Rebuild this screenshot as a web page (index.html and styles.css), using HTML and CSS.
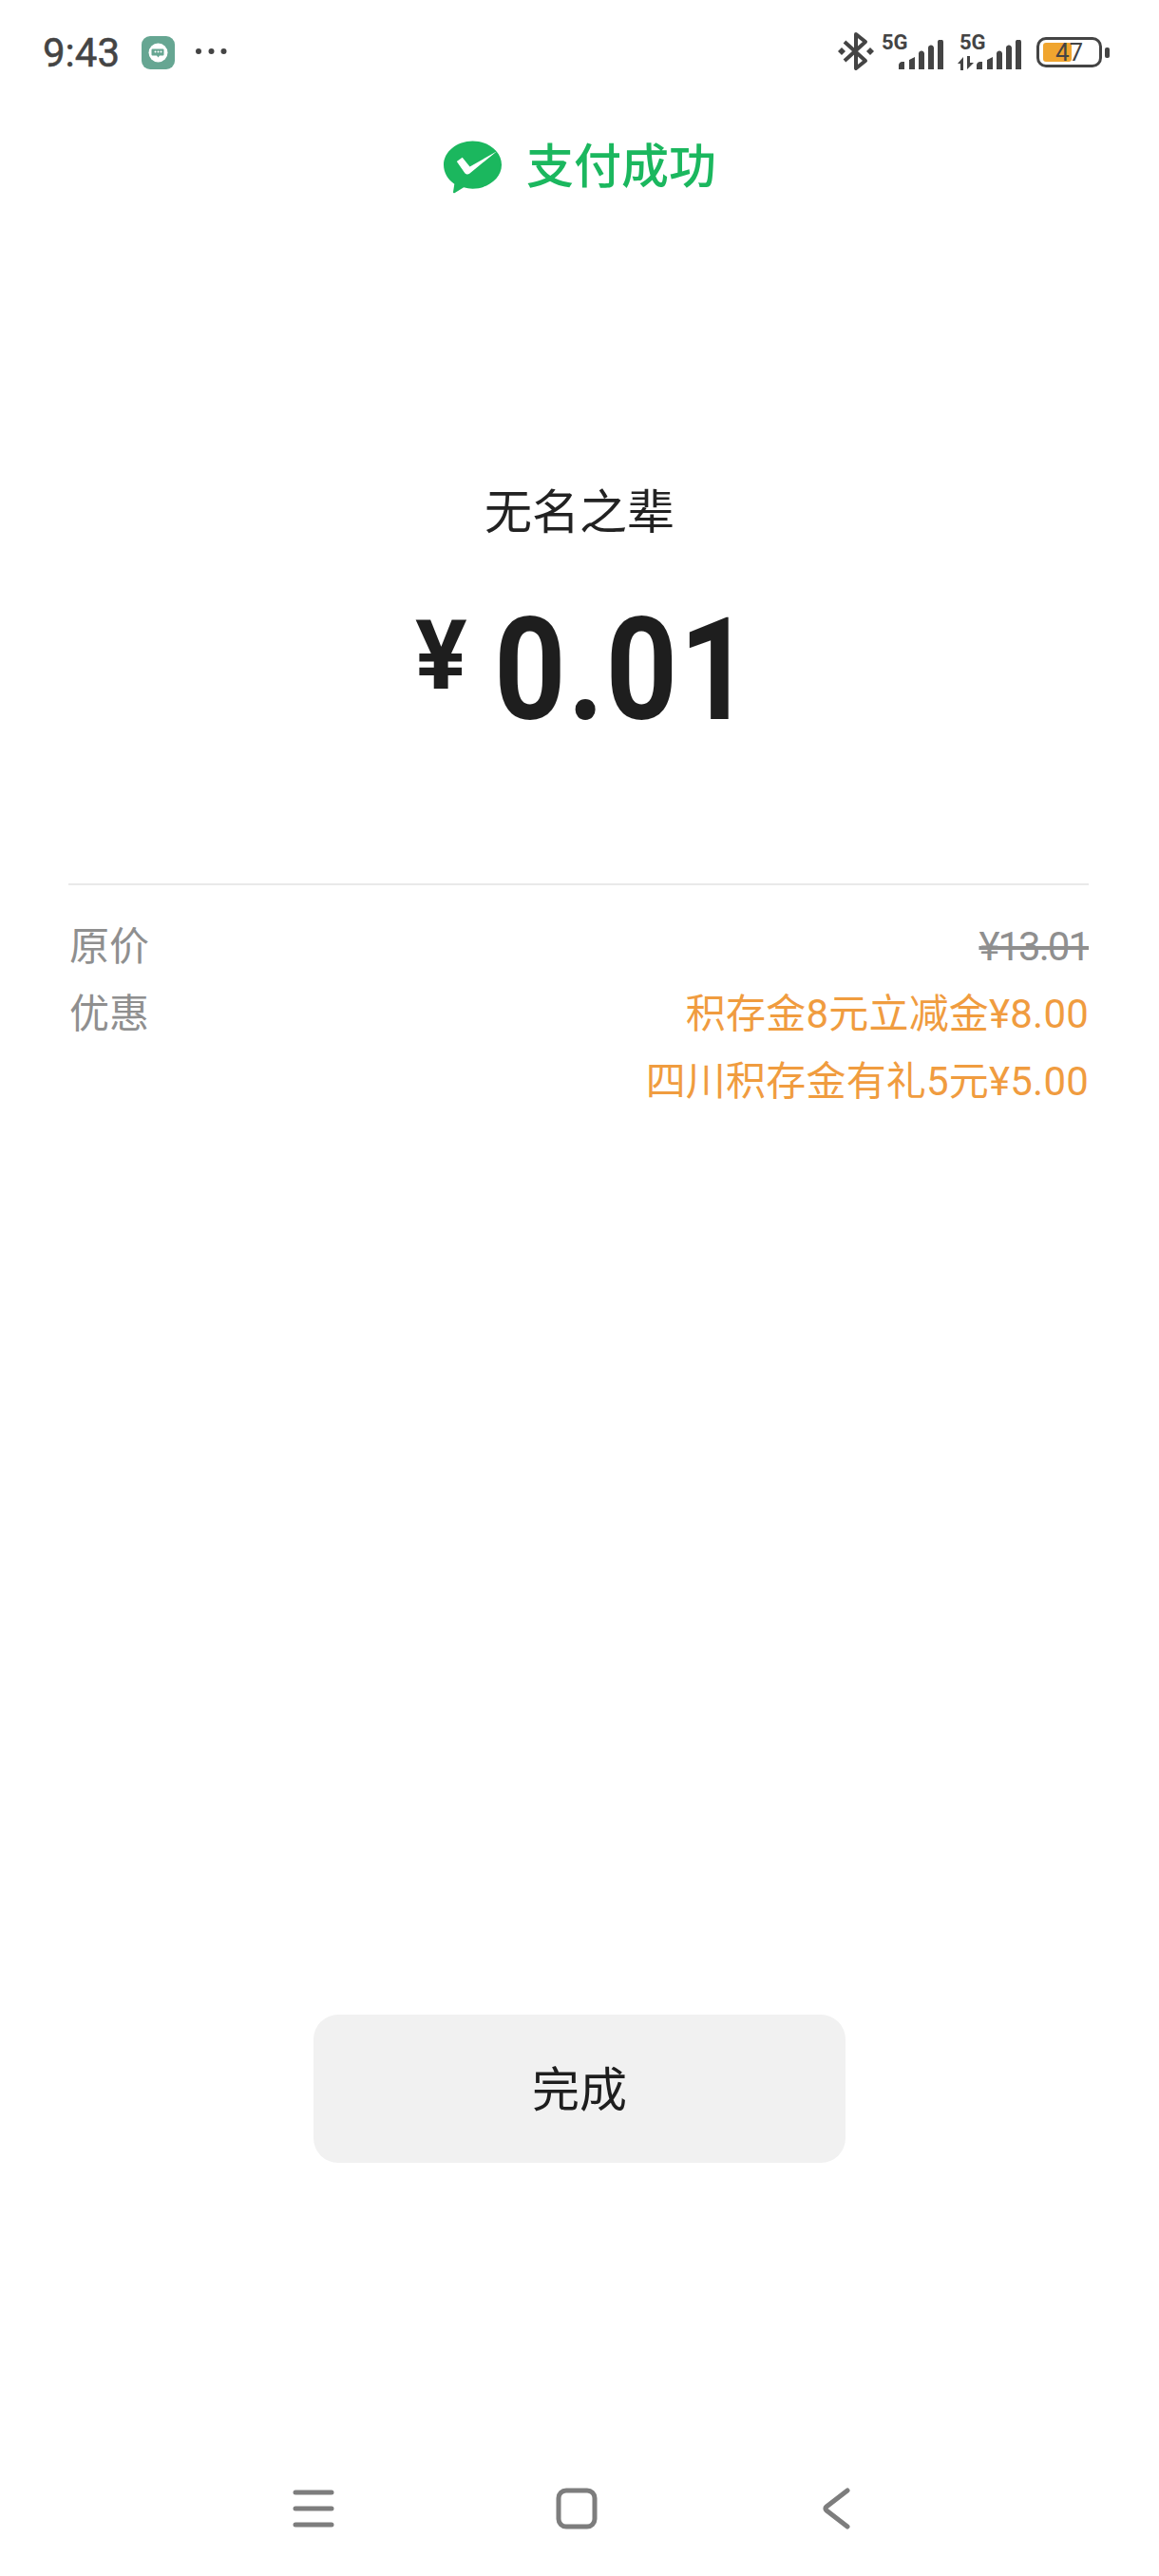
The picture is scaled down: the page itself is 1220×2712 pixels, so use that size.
FILE: index.html
```html
<!DOCTYPE html>
<html lang="zh-CN">
<head>
    <meta charset="UTF-8">
    <meta name="viewport" content="width=device-width, initial-scale=1.0">
    <title>支付成功</title>
    <link rel="stylesheet" href="styles.css">
</head>
<body>
    <div class="page">
        <div class="status-bar">
            <div class="status-left">
                <span class="time">9:43</span>
                <svg class="app-icon" width="35" height="35" viewBox="0 0 35 35">
                    <rect width="35" height="35" rx="9" fill="#66a692"/>
                    <circle cx="17.500" cy="17.500" r="10" fill="#fff"/>
                    <path d="M12.500 13.500h10a1 1 0 0 1 1 1v5a1 1 0 0 1-1 1h-3.500l-1.500 2-1.500-2h-4.500a1 1 0 0 1-1-1v-5a1 1 0 0 1 1-1z" fill="#66a692"/>
                    <circle cx="14.500" cy="16.500" r="1" fill="#fff"/>
                    <circle cx="17.500" cy="16.500" r="1" fill="#fff"/>
                    <circle cx="20.500" cy="16.500" r="1" fill="#fff"/>
                </svg>
                <svg class="dots" width="34" height="8" viewBox="0 0 34 8">
                    <circle cx="4" cy="4" r="3" fill="#444"/>
                    <circle cx="17.500" cy="4" r="3" fill="#444"/>
                    <circle cx="30.500" cy="4" r="3" fill="#444"/>
                </svg>
            </div>
            <div class="status-right">
                <svg class="bluetooth" width="40" height="42" viewBox="0 0 40 42">
                    <path d="M8 11l22 20-10 8V3l10 8L8 31" fill="none" stroke="#444" stroke-width="4" stroke-linejoin="round"/>
                    <path d="M5 17l4 4-4 4-4-4zM35 17l4 4-4 4-4-4z" fill="#444"/>
                </svg>
                <div class="signal">
                    <span class="net-label">5G</span>
                    <svg class="bars" width="48" height="32" viewBox="0 0 48 32">
                        <path d="M0 26a4 4 0 0 1 3-3h3v8H0zM11 21l6-3v13h-6zM21 15a3 3 0 0 1 6-1v17h-6zM31 9a3 3 0 0 1 6-1v23h-6zM41 3a3 3 0 0 1 6-1v29h-6z" fill="#444"/>
                    </svg>
                </div>
                <div class="signal second">
                    <span class="net-label">5G</span>
                    <svg class="arrows" width="18" height="15" viewBox="0 0 18 15">
                        <path d="M0 8l6-7v14H3V8zM10 0h3v7h4l-7 7z" fill="#444"/>
                    </svg>
                    <svg class="bars" width="48" height="32" viewBox="0 0 48 32">
                        <path d="M0 26a4 4 0 0 1 3-3h3v8H0zM11 21l6-3v13h-6zM21 15a3 3 0 0 1 6-1v17h-6zM31 9a3 3 0 0 1 6-1v23h-6zM41 3a3 3 0 0 1 6-1v29h-6z" fill="#444"/>
                    </svg>
                </div>
                <div class="battery">
                    <div class="battery-body">
                        <div class="battery-fill"></div>
                        <span class="battery-num">47</span>
                    </div>
                    <div class="battery-nub"></div>
                </div>
            </div>
        </div>

        <div class="title-row">
            <svg class="pay-logo" width="61" height="56" viewBox="0 0 62 56">
                <path d="M31 0c17 0 31 11.500 31 25.500S48 51 31 51c-3.500 0-6.500-.5-9.500-1.300L12 55.500c-1 .5-2 0-1.800-1.200l1.300-8.300C4.500 41.300 0 33.800 0 25.500 0 11.500 14 0 31 0z" fill="#1bb75e"/>
                <path d="M14 22l6-4.500 8 10L57 11 28 34.500c-2 1.500-4 1.300-5.500-.5z" fill="#fff"/>
            </svg>
            <span class="title-text">支付成功</span>
        </div>

        <div class="payee">无名之辈</div>
        <div class="amount">
            <span class="amount-unit">¥</span>
            <span class="amount-num">0.01</span>
        </div>

        <div class="details">
            <div class="detail-row">
                <span class="detail-label">原价</span>
                <div class="detail-values">
                    <span class="old-price">¥13.01</span>
                </div>
            </div>
            <div class="detail-row">
                <span class="detail-label">优惠</span>
                <div class="detail-values">
                    <span class="discount">积存金8元立减金¥8.00</span>
                    <span class="discount">四川积存金有礼5元¥5.00</span>
                </div>
            </div>
        </div>

        <div class="button-container">
            <button class="done-btn">完成</button>
        </div>

        <div class="nav-bar">
            <svg width="44" height="44" viewBox="0 0 44 44">
                <path d="M3 5h38M3 22h38M3 39h38" fill="none" stroke="#7d7d7d" stroke-width="5" stroke-linecap="round"/>
            </svg>
            <svg class="nav-home" width="44" height="44" viewBox="0 0 44 44">
                <rect x="3" y="3" width="38" height="38" rx="8" fill="none" stroke="#7d7d7d" stroke-width="5"/>
            </svg>
            <svg class="nav-back" width="32" height="44" viewBox="0 0 32 44">
                <path d="M28 3L6 20c-1.500 1.300-1.500 2.700 0 4l22 17" fill="none" stroke="#7d7d7d" stroke-width="5" stroke-linecap="round"/>
            </svg>
        </div>
    </div>
</body>
</html>
```

FILE: styles.css
```css
* {
    box-sizing: border-box;
}
body {
    margin: 0;
    background-color: #fff;
    font-family: Roboto, "Noto Sans CJK SC", sans-serif;
}
.page {
    height: 2712px;
    display: flex;
    flex-direction: column;
    overflow: hidden;
}
.status-bar {
    height: 108px;
    padding: 32px 52px 0 45px;
    display: flex;
    justify-content: space-between;
    align-items: flex-start;
}
.status-left {
    display: flex;
    align-items: center;
    height: 44px;
}
.time {
    position: relative;
    top: 2px;
    font-size: 42px;
    line-height: 44px;
    -webkit-text-stroke: 0.5px #444;
    color: #444;
}
.app-icon {
    margin-left: 23px;
    margin-top: 2px;
}
.dots {
    margin-left: 21px;
}
.status-right {
    display: flex;
    align-items: flex-start;
}
.bluetooth {
    margin-top: 1px;
}
.signal {
    position: relative;
    width: 66px;
    height: 42px;
    margin-left: 7px;
    display: flex;
    justify-content: flex-end;
    align-items: flex-end;
}
.signal.second {
    margin-left: 16px;
}
.net-label {
    position: absolute;
    left: 0;
    top: 2px;
    font-size: 22px;
    line-height: 22px;
    font-weight: 700;
    color: #444;
}
.arrows {
    position: absolute;
    left: -2px;
    bottom: 0;
}
.battery {
    margin-left: 15px;
    margin-top: 7px;
    display: flex;
    align-items: center;
}
.battery-body {
    position: relative;
    width: 69px;
    height: 32px;
    border: 3px solid #444;
    border-radius: 10px;
}
.battery-fill {
    position: absolute;
    left: 4px;
    top: 3px;
    bottom: 3px;
    width: 30px;
    border-radius: 3px;
    background-color: #f0a52f;
}
.battery-num {
    position: absolute;
    left: 17px;
    top: 0;
    font-size: 26px;
    line-height: 26px;
    color: #444;
}
.battery-nub {
    width: 5px;
    height: 11px;
    margin-left: 3px;
    border-radius: 2px;
    background-color: #444;
}
.title-row {
    margin-top: 38px;
    margin-left: 467px;
    display: flex;
    align-items: center;
    gap: 26px;
}
.title-text {
    font-size: 50px;
    line-height: 60px;
    font-weight: 500;
    color: #1bb75e;
}
.payee {
    margin-top: 299px;
    text-align: center;
    font-size: 50px;
    line-height: 70px;
    color: #222;
}
.amount {
    margin-top: 51px;
    margin-left: 437px;
    display: flex;
    align-items: flex-start;
    height: 160px;
}
.amount-unit {
    margin-top: 4px;
    font-size: 102px;
    line-height: 120px;
    font-weight: 700;
    color: #1e1e1e;
}
.amount-num {
    margin-left: 28px;
    font-size: 150px;
    line-height: 160px;
    font-weight: 700;
    letter-spacing: 2px;
    color: #1e1e1e;
    display: inline-block;
    transform: scaleX(0.88);
    transform-origin: left top;
}
.details {
    margin: 144px 74px 0 72px;
    padding-top: 29px;
    border-top: 2px solid #e9e9e9;
}
.detail-row {
    display: flex;
    justify-content: space-between;
    font-size: 42px;
    line-height: 71px;
}
.detail-label {
    margin-left: 1px;
    color: #8f8f8f;
}
.detail-values {
    display: flex;
    flex-direction: column;
    align-items: flex-end;
}
.old-price {
    color: #8f8f8f;
    letter-spacing: -2px;
    text-decoration: line-through;
}
.discount {
    letter-spacing: 0.2px;
    color: #f09c3f;
}
.button-container {
    margin-top: auto;
    text-align: center;
}
.done-btn {
    width: 560px;
    height: 156px;
    border: none;
    border-radius: 26px;
    padding-bottom: 8px;
    background-color: #f1f1f1;
    font-family: inherit;
    font-size: 50px;
    color: #1e1e1e;
}
.nav-bar {
    height: 89px;
    margin-top: 342px;
    margin-bottom: 4px;
    display: flex;
    align-items: flex-start;
    padding-left: 308px;
}
.nav-home {
    margin-left: 233px;
}
.nav-back {
    margin-left: 235px;
}
```
